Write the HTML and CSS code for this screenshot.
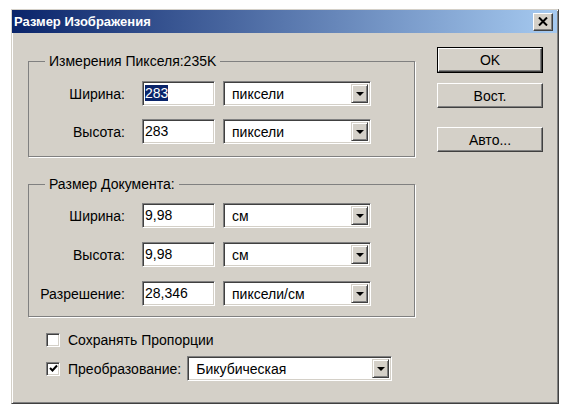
FILE: index.html
```html
<!DOCTYPE html>
<html>
  <head>
    <title>Размер Изображения</title>
    <link rel="stylesheet" href="styles.css">
  </head>
  <body>
    <div class="window">
      <div class="titlebar">
        <span class="title">Размер Изображения</span>
        <div class="close">
          <svg width="10" height="9" viewBox="0 0 10 9">
            <path d="M1 0.5 L9 8.5 M9 0.5 L1 8.5" stroke="#000" stroke-width="2" />
          </svg>
        </div>
      </div>

      <div class="dialog">
        <div class="left">
          <fieldset class="group group-pixels">
            <legend>Измерения Пикселя:235K</legend>
            <div class="row">
              <label>Ширина:</label>
              <div class="field"><span class="selected">283</span></div>
              <div class="select"><span>пиксели</span><div class="drop"><i></i></div></div>
            </div>
            <div class="row">
              <label>Высота:</label>
              <div class="field">283</div>
              <div class="select"><span>пиксели</span><div class="drop"><i></i></div></div>
            </div>
          </fieldset>

          <fieldset class="group group-doc">
            <legend>Размер Документа:</legend>
            <div class="row">
              <label>Ширина:</label>
              <div class="field">9,98</div>
              <div class="select"><span>см</span><div class="drop"><i></i></div></div>
            </div>
            <div class="row">
              <label>Высота:</label>
              <div class="field">9,98</div>
              <div class="select"><span>см</span><div class="drop"><i></i></div></div>
            </div>
            <div class="row">
              <label>Разрешение:</label>
              <div class="field">28,346</div>
              <div class="select"><span>пиксели/см</span><div class="drop"><i></i></div></div>
            </div>
          </fieldset>

          <div class="options">
            <div class="check-row">
              <span class="checkbox"></span>
              <span>Сохранять Пропорции</span>
            </div>
            <div class="check-row">
              <span class="checkbox">
                <svg width="9" height="9" viewBox="0 0 9 9">
                  <polyline points="1,4 3.5,6.5 8,1.5" fill="none" stroke="#000" stroke-width="2" />
                </svg>
              </span>
              <span>Преобразование:</span>
              <div class="select select-wide"><span>Бикубическая</span><div class="drop"><i></i></div></div>
            </div>
          </div>
        </div>

        <div class="buttons">
          <div class="btn btn-default"><div class="btn-face">OK</div></div>
          <div class="btn"><div class="btn-face">Вост.</div></div>
          <div class="btn btn-auto"><div class="btn-face">Авто...</div></div>
        </div>
      </div>
    </div>
  </body>
</html>
```

FILE: styles.css
```css
body {
  margin: 0;
  padding: 9px 0 0 11px;
  background: #fff;
  font-family: "Liberation Sans", Arial, sans-serif;
  font-size: 14px;
  color: #000;
}
.window {
  width: 548px;
  height: 395px;
  box-sizing: border-box;
  background: #d4d0c8;
  border: 1px solid;
  border-color: #d4d0c8 #404040 #404040 #d4d0c8;
  box-shadow: inset 1px 1px #fff, inset -1px -1px #808080;
}
.titlebar {
  height: 23px;
  margin-right: 1px;
  display: flex;
  align-items: center;
  justify-content: space-between;
  padding: 0 4px 0 2px;
  background: linear-gradient(to right, #0a246a, #a6caf0);
}
.title {
  color: #fff;
  font-weight: bold;
  font-size: 13px;
}
.close {
  width: 20px;
  height: 18px;
  box-sizing: border-box;
  display: flex;
  align-items: center;
  justify-content: center;
  background: #d4d0c8;
  border: 1px solid;
  border-color: #fff #404040 #404040 #fff;
  box-shadow: inset -1px -1px #808080;
}
.dialog {
  display: grid;
  grid-template-columns: 387px 106px;
  column-gap: 22px;
  padding: 14px 0 0 16px;
}
.left {
  margin-top: 7px;
}
.group {
  margin: 0;
  padding: 0;
  border: 1px solid #808080;
  box-shadow: 1px 1px 0 #fff;
}
.group legend {
  margin-left: 16px;
  padding: 0 4px;
  line-height: 15px;
}
.group-pixels {
  padding: 12px 0 12px 0;
  display: grid;
  row-gap: 13px;
}
.group-doc {
  margin-top: 20px;
  padding: 11px 0 10px 0;
  display: grid;
  row-gap: 14px;
}
.row {
  display: grid;
  grid-template-columns: 105px 73px 148px;
  column-gap: 8px;
  height: 25px;
  align-items: center;
}
.row label {
  text-align: right;
  padding-right: 9px;
}
.field,
.select {
  height: 25px;
  box-sizing: border-box;
  background: #fff;
  border: 1px solid;
  border-color: #808080 #fff #fff #808080;
  box-shadow: inset 1px 1px #404040, inset -1px -1px #d4d0c8;
}
.field {
  padding: 3px 2px 0 2px;
  line-height: 17px;
}
.selected {
  background: #0a246a;
  color: #fff;
}
.select {
  display: flex;
  align-items: center;
  padding: 2px;
}
.select span {
  flex: 1;
  padding-left: 6px;
}
.drop {
  width: 17px;
  height: 100%;
  box-sizing: border-box;
  display: flex;
  align-items: center;
  justify-content: center;
  background: #d4d0c8;
  border: 1px solid;
  border-color: #d4d0c8 #404040 #404040 #d4d0c8;
  box-shadow: inset 1px 1px #fff, inset -1px -1px #808080;
}
.drop i {
  width: 0;
  height: 0;
  border-left: 4px solid transparent;
  border-right: 4px solid transparent;
  border-top: 4px solid #000;
}
.options {
  margin-top: 10px;
  padding-left: 18px;
  display: grid;
  row-gap: 4px;
}
.check-row {
  display: flex;
  align-items: center;
  height: 25px;
}
.checkbox {
  width: 14px;
  height: 14px;
  box-sizing: border-box;
  margin-right: 8px;
  display: flex;
  align-items: center;
  justify-content: center;
  background: #fff;
  border: 1px solid;
  border-color: #808080 #fff #fff #808080;
  box-shadow: inset 1px 1px #404040, inset -1px -1px #d4d0c8;
}
.select-wide {
  width: 205px;
  margin-left: 6px;
}
.buttons {
  display: flex;
  flex-direction: column;
}
.btn {
  height: 25px;
  box-sizing: border-box;
  margin-bottom: 10px;
  border: 1px solid;
  border-color: #fff #404040 #404040 #fff;
  box-shadow: inset -1px -1px #808080;
}
.btn-face {
  height: 100%;
  display: flex;
  align-items: center;
  justify-content: center;
}
.btn-default {
  height: 26px;
  border: 1px solid #000;
  box-shadow: none;
}
.btn-default .btn-face {
  box-sizing: border-box;
  border: 1px solid;
  border-color: #fff #404040 #404040 #fff;
  box-shadow: inset -1px -1px #808080;
}
.btn-auto {
  margin-top: 9px;
}
```
